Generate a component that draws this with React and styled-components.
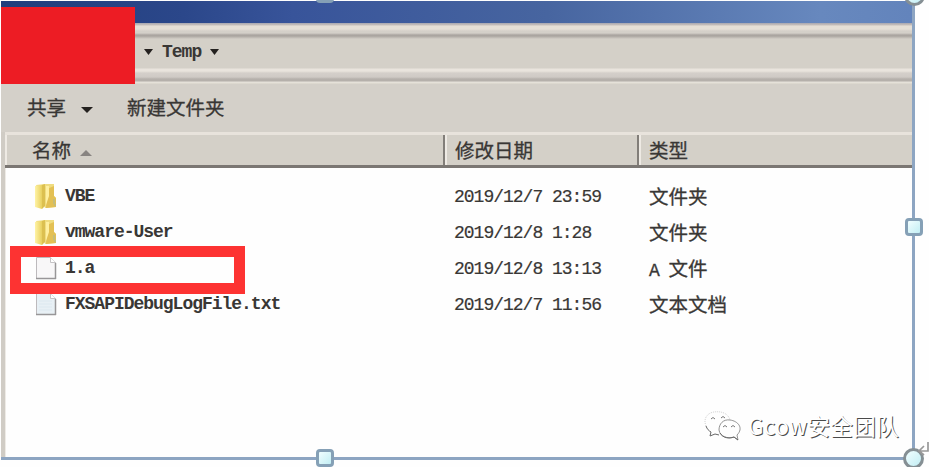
import React from "react";
import styled, { createGlobalStyle } from "styled-components";

const GlobalStyle = createGlobalStyle`
  * { box-sizing: border-box; }
  body { margin: 0; background: #fff; overflow: hidden; }
`;

const Page = styled.main`
  position: relative;
  width: 929px;
  height: 467px;
  overflow: hidden;
  background: #fefefe;
  color: #393735;
  font-family: "Liberation Mono", "Noto Sans CJK SC", monospace;
  padding: 1px 0 0 1px;
`;

const Explorer = styled.section`
  display: flex;
  flex-direction: column;
  width: 914px;
  height: 459px;
  border-right: 3px solid #8da5c2;
  border-bottom: 3px solid #8da5c2;
  background: #fefefe;
`;

const TitleBar = styled.header`
  flex: 0 0 22px;
  background: linear-gradient(90deg, #203e7c 0%, #2b478a 20%, #38549a 32%, #4765a0 60%, #6788be 90%, #6384bc 100%);
`;

const AddressBar = styled.nav`
  display: flex;
  flex: 0 0 61px;
  align-items: center;
  gap: 9px;
  padding: 0 0 3px 143px;
  background: linear-gradient(
    180deg,
    #a7a7b1 0, #c8c0bb 2px, #e5dfd6 3px, #e5dfd6 6px, #d4d0c9 8px, #d4d0c9 10px,
    #aaa5a0 12px, #aaa5a0 13px, #d4d0c8 16px, #d4d0c8 45px, #e9e4dd 46px,
    #e9e4dd 48px, #d4cfca 50px, #cfcac5 54px, #b5b0ab 56px, #b5b0ab 58px,
    #e5e1d9 59px, #e5e1d9 60px, #d4d0c5 61px
  );
`;

const FolderPath = styled.span`
  font-size: 18px;
  font-weight: 700;
  line-height: 20px;
  letter-spacing: -1px;
`;

const Toolbar = styled.div`
  display: flex;
  flex: 0 0 48px;
  align-items: center;
  gap: 34px;
  padding: 3px 0 0 26px;
  background: #d4d0c9;
`;

const ToolButton = styled.button`
  display: flex;
  align-items: center;
  gap: 15px;
  border: 0;
  padding: 0;
  background: none;
  color: inherit;
  font-family: inherit;
  font-size: 19.5px;
  line-height: 28px;
  -webkit-text-stroke: 0.3px currentColor;
`;

const Table = styled.div`
  flex: 1;
  border-left: 4px solid #d0ccc5;
  box-shadow: inset 1px 0 #eeebe6;
`;

const columns = "440px 194px 1fr";

const TableHeader = styled.div`
  display: grid;
  grid-template-columns: ${columns};
  height: 36px;
  border-top: 3px solid #e8e3dc;
  border-bottom: 3px solid #7b7773;
  background: #d4d0c8;
`;

const HeaderCell = styled.div`
  display: flex;
  align-items: center;
  gap: 9px;
  padding: 6px 0 0 ${({ $first }) => ($first ? "25px" : "8px")};
  border-left: 2px solid #eeeae4;
  border-right: ${({ $last }) => ($last ? "0" : "2px solid #827e79")};
  font-size: 19.5px;
  line-height: 24px;
  -webkit-text-stroke: 0.3px currentColor;
`;

const Files = styled.div`
  padding-top: 10px;
`;

const FileRow = styled.div`
  display: grid;
  grid-template-columns: ${columns};
  height: 36px;
  align-items: center;
`;

const FileName = styled.div`
  display: flex;
  align-items: center;
  gap: 7px;
  padding-left: 29px;
  font-size: 18px;
  font-weight: 700;
  letter-spacing: -1.02px;
`;

const DateCell = styled.div`
  padding: 1px 0 0 9px;
  font-size: 18px;
  letter-spacing: -1px;
  -webkit-text-stroke: 0.2px currentColor;
`;

const TypeCell = styled.div`
  padding: 5px 0 0 10px;
  font-size: 19.5px;
  line-height: 30px;
  white-space: pre;
  -webkit-text-stroke: 0.3px currentColor;
`;

const Latin = styled.span`
  font-size: 18px;
  letter-spacing: -1px;
`;

const Icon = styled.svg`
  display: block;
  flex: none;
`;

const RedBlock = styled.div`
  position: absolute;
  left: 1px;
  top: 7px;
  width: 134px;
  height: 77px;
  background: #ed1c24;
`;

const FileHighlight = styled.div`
  position: absolute;
  left: 10px;
  top: 246px;
  width: 235px;
  height: 48px;
  border: 11px solid #fd3332;
`;

const Handle = styled.div`
  position: absolute;
  left: ${({ $x }) => $x}px;
  top: ${({ $y }) => $y}px;
  width: ${({ $round }) => ($round ? 21 : 18)}px;
  height: ${({ $round }) => ($round ? 21 : 18)}px;
  border: 3px solid ${({ $round }) => ($round ? "#858f94" : "#85a0b6")};
  border-radius: ${({ $round }) => ($round ? "50%" : "4px")};
  background: linear-gradient(135deg, #f1feff, #c2eef4);
`;

const ReturnMark = styled.svg`
  position: absolute;
  left: 917px;
  top: 441px;
`;

const Watermark = styled.div`
  position: absolute;
  left: 704px;
  top: 406px;
  display: flex;
  align-items: center;
  gap: 6px;
`;

const WatermarkText = styled.span`
  color: #fff;
  font: 22.6px/40px "Noto Sans CJK SC", sans-serif;
  letter-spacing: 0.3px;
  text-shadow: 1px 1px 0 #4a4a4a;
  white-space: nowrap;
`;

function Arrow({ up, width = 10, color = "#24211f" }) {
  return (
    <Icon width={width} height="6" viewBox="0 0 12 6" preserveAspectRatio="none">
      <path d={up ? "M6 0l6 6H0z" : "M0 0h12L6 6z"} fill={color} />
    </Icon>
  );
}

function FolderIcon() {
  return (
    <Icon width="24" height="27" viewBox="0 0 24 27">
      <defs>
        <linearGradient id="folder-front">
          <stop stopColor="#fff3a5" />
          <stop offset="1" stopColor="#e8d05f" />
        </linearGradient>
      </defs>
      <path d="M2 2l9-1h9v12l2 2v9l-11 1z" fill="#efdc80" />
      <path d="M13 6l7-3v10l2 2v9l-10 1z" fill="#e3c054" />
      <path d="M1 3l7-1v24l-7-2z" fill="url(#folder-front)" />
      <path d="M8 2l3-1v22l-3 3z" fill="#dcc050" />
      <path d="M12 3h3v10l-3 9z" fill="#fff0a0" />
      <path d="M20 16v5M21 21v2" stroke="#a8b99b" strokeWidth="1" />
    </Icon>
  );
}

function DocumentIcon({ text }) {
  return (
    <Icon width="24" height="25" viewBox="0 0 24 25">
      <path d="M2.5 1.5h14l5 5v16h-19z" fill={text ? "#e8f0f5" : "#f8f7f8"} stroke="#bdbabd" />
      <path d="M2 22.5h20M21.5 7v16" stroke="#989698" strokeWidth="1.5" />
      <path d="M16.5 1.5v5h5" fill="#fff" stroke="#c5c3c5" />
      {text && <path d="M5 9h13M5 12h13M5 15h13M5 18h13" stroke="#dce8ef" />}
    </Icon>
  );
}

function WeChatIcon() {
  return (
    <Icon width="38" height="34" viewBox="0 0 38 34" fill="none">
      <path d="M2 17C-1 10 3 4 10 3c7-1 14 1 16 8" stroke="#bbb" strokeWidth=".7" strokeDasharray="1 1" />
      <path d="M26 11c-7-1-11 4-11 10 1 7 9 9 15 7l4 3-1-5c7-7 1-14-7-15z" stroke="#777" strokeWidth=".8" />
      <path d="M2 17c1 3 3 5 5 6l-1 4 5-2 4 1M16 24c3 5 9 6 14 4l4 3" stroke="#666" />
      <path d="M7 10q2-3 4 0M17 9q2-3 4 0M19 18q2-3 4 0M27 18q2-3 4 0" stroke="#777" />
    </Icon>
  );
}

const files = [
  { name: "VBE", date: "2019/12/7 23:59", type: "文件夹", icon: <FolderIcon /> },
  { name: "vmware-User", date: "2019/12/8 1:28", type: "文件夹", icon: <FolderIcon /> },
  { name: "1.a", date: "2019/12/8 13:13", prefix: "A ", type: "文件", icon: <DocumentIcon /> },
  { name: "FXSAPIDebugLogFile.txt", date: "2019/12/7 11:56", type: "文本文档", icon: <DocumentIcon text /> },
];

export default function App() {
  return (
    <Page>
      <GlobalStyle />
      <Explorer>
        <TitleBar />
        <AddressBar>
          <Arrow width={9} />
          <FolderPath>Temp</FolderPath>
          <Arrow width={9} />
        </AddressBar>
        <Toolbar>
          <ToolButton>共享 <Arrow width={12} /></ToolButton>
          <ToolButton>新建文件夹</ToolButton>
        </Toolbar>
        <Table>
          <TableHeader>
            <HeaderCell $first>名称 <Arrow up width={12} color="#888481" /></HeaderCell>
            <HeaderCell>修改日期</HeaderCell>
            <HeaderCell $last>类型</HeaderCell>
          </TableHeader>
          <Files>
            {files.map((file) => (
              <FileRow key={file.name}>
                <FileName>{file.icon}{file.name}</FileName>
                <DateCell>{file.date}</DateCell>
                <TypeCell>{file.prefix && <Latin>{file.prefix}</Latin>}{file.type}</TypeCell>
              </FileRow>
            ))}
          </Files>
        </Table>
      </Explorer>
      <RedBlock />
      <FileHighlight />
      <Handle $x={316} $y={-15} />
      <Handle $x={904} $y={-15} $round />
      <Handle $x={905} $y={218} />
      <Handle $x={316} $y={449} />
      <Handle $x={903} $y={448} $round />
      <ReturnMark width="13" height="16" viewBox="0 0 13 16" fill="none" stroke="#999" strokeWidth="1.7">
        <path d="M11 1v9H3M7 5l-5 5 5 4" />
      </ReturnMark>
      <Watermark>
        <WeChatIcon />
        <WatermarkText>Gcow安全团队</WatermarkText>
      </Watermark>
    </Page>
  );
}
